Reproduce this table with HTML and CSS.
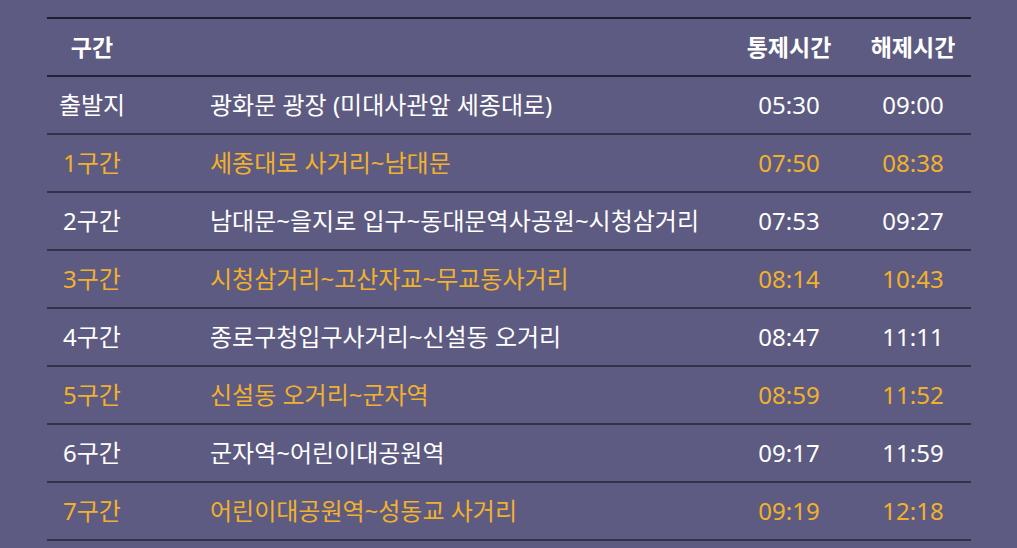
FILE: index.html
```html
<!DOCTYPE html>
<html lang="ko">
<head>
    <meta charset="UTF-8">
    <meta name="viewport" content="width=device-width, initial-scale=1.0">
    <title>구간별 통제시간</title>
    <link rel="stylesheet" href="styles.css">
</head>
<body>
    <div class="wrap">
        <table class="schedule">
            <colgroup>
                <col class="c-sec">
                <col class="c-route">
                <col class="c-close">
                <col class="c-open">
            </colgroup>
            <thead>
                <tr>
                    <th class="sec">구간</th>
                    <th class="route"></th>
                    <th>통제시간</th>
                    <th>해제시간</th>
                </tr>
            </thead>
            <tbody>
                <tr>
                    <td class="sec">출발지</td>
                    <td class="route">광화문 광장 (미대사관앞 세종대로)</td>
                    <td>05:30</td>
                    <td>09:00</td>
                </tr>
                <tr class="hl">
                    <td class="sec">1구간</td>
                    <td class="route">세종대로 사거리~남대문</td>
                    <td>07:50</td>
                    <td>08:38</td>
                </tr>
                <tr>
                    <td class="sec">2구간</td>
                    <td class="route">남대문~을지로 입구~동대문역사공원~시청삼거리</td>
                    <td>07:53</td>
                    <td>09:27</td>
                </tr>
                <tr class="hl">
                    <td class="sec">3구간</td>
                    <td class="route">시청삼거리~고산자교~무교동사거리</td>
                    <td>08:14</td>
                    <td>10:43</td>
                </tr>
                <tr>
                    <td class="sec">4구간</td>
                    <td class="route">종로구청입구사거리~신설동 오거리</td>
                    <td>08:47</td>
                    <td>11:11</td>
                </tr>
                <tr class="hl">
                    <td class="sec">5구간</td>
                    <td class="route">신설동 오거리~군자역</td>
                    <td>08:59</td>
                    <td>11:52</td>
                </tr>
                <tr>
                    <td class="sec">6구간</td>
                    <td class="route">군자역~어린이대공원역</td>
                    <td>09:17</td>
                    <td>11:59</td>
                </tr>
                <tr class="hl">
                    <td class="sec">7구간</td>
                    <td class="route">어린이대공원역~성동교 사거리</td>
                    <td>09:19</td>
                    <td>12:18</td>
                </tr>
            </tbody>
        </table>
    </div>
</body>
</html>
```

FILE: styles.css
```css
/* 구간별 통제 시간표 */
body {
    margin: 0;
    background: #5d5b81;
    font-family: "Noto Sans", "Noto Sans CJK KR", sans-serif;
    color: #fff;
}
.wrap {
    padding: 17px 46px 0 47px;
}
.schedule {
    width: 924px;
    border-collapse: collapse;
    border-spacing: 0;
    table-layout: fixed;
    font-size: 24px;
    border-top: 2px solid #1f1e2c;
}
.c-sec {
    width: 90px;
}
.c-close {
    width: 132px;
}
.c-open {
    width: 116px;
}
.schedule th,
.schedule td {
    height: 56px;
    padding: 0;
    text-align: center;
    vertical-align: middle;
    line-height: 1;
}
.schedule th {
    font-weight: 700;
    font-size: 23px;
    border-bottom: 2px solid #24233a;
}
.schedule td {
    font-weight: 400;
    border-bottom: 2px solid #33324b;
}
.schedule .route {
    text-align: left;
    padding-left: 73px;
    white-space: nowrap;
}
.schedule .hl td {
    color: #f2b12c;
}
```
